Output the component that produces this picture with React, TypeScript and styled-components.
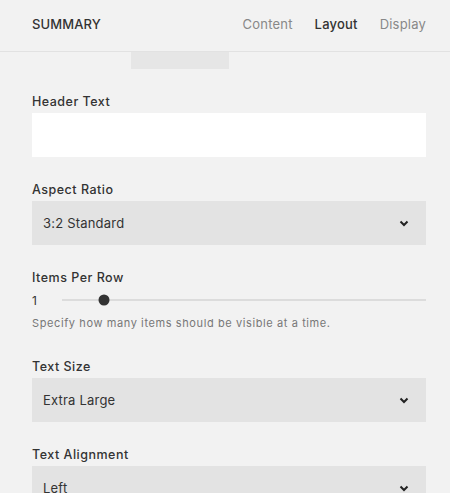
import React from "react";
import styled, { createGlobalStyle } from "styled-components";

const GlobalStyle = createGlobalStyle`
  html, body {
    margin: 0;
    padding: 0;
    background: #f2f2f2;
  }
  body {
    font-family: Inter, "Liberation Sans", sans-serif;
    -webkit-font-smoothing: antialiased;
  }
`;

const Chevron = () => (
  <svg width="10" height="7" viewBox="0 0 10 7">
    <path d="M1.5 1.5 L5 5 L8.5 1.5" fill="none" stroke="#222" strokeWidth="2" />
  </svg>
);

const SelectField: React.VFC<{ value: string }> = ({ value }) => (
  <Select>
    <span>{value}</span>
    <Chevron />
  </Select>
);

export default function App() {
  return (
    <>
      <GlobalStyle />
      <Panel>
        <Header>
          <Title>SUMMARY</Title>
          <Tabs>
            <Tab>Content</Tab>
            <Tab active>Layout</Tab>
            <Tab>Display</Tab>
          </Tabs>
        </Header>
        <Indicator />
        <Body>
          <Field>
            <Label>Header Text</Label>
            <TextInput />
          </Field>
          <Field>
            <Label>Aspect Ratio</Label>
            <SelectField value="3:2 Standard" />
          </Field>
          <Field>
            <Label>Items Per Row</Label>
            <SliderRow>
              <SliderValue>1</SliderValue>
              <Track>
                <Thumb style={{ left: `${(42 / 364) * 100}%` }} />
              </Track>
            </SliderRow>
            <Help>Specify how many items should be visible at a time.</Help>
          </Field>
          <Field>
            <Label>Text Size</Label>
            <SelectField value="Extra Large" />
          </Field>
          <Field>
            <Label>Text Alignment</Label>
            <SelectField value="Left" />
          </Field>
        </Body>
      </Panel>
    </>
  );
}

const Panel = styled.div`
  width: 450px;
  height: 493px;
  overflow: hidden;
  background: #f2f2f2;
`;

const Header = styled.header`
  height: 51px;
  display: flex;
  align-items: center;
  justify-content: space-between;
  padding: 0 24px 0 32px;
  border-bottom: 1px solid #e2e2e2;
`;

const Title = styled.div`
  font-size: 13px;
  font-weight: 500;
  letter-spacing: 0.1px;
  color: #333;
  margin-top: -3px;
`;

const Tabs = styled.nav`
  display: flex;
  gap: 22px;
  margin-top: -3px;
`;

const Tab = styled.span<{ active?: boolean }>`
  font-size: 13px;
  letter-spacing: 0.2px;
  font-weight: ${(p) => (p.active ? 500 : 400)};
  color: ${(p) => (p.active ? "#333" : "#888")};
`;

const Indicator = styled.div`
  margin-left: 131px;
  width: 98px;
  height: 17px;
  background: #e6e6e6;
`;

const Body = styled.div`
  padding: 24px 24px 0 32px;
  display: flex;
  flex-direction: column;
  gap: 24px;
`;

const Field = styled.div`
  display: flex;
  flex-direction: column;
`;

const Label = styled.label`
  font-size: 12.5px;
  line-height: 16px;
  font-weight: 500;
  letter-spacing: 0.5px;
  color: #333;
  padding-top: 1px;
  margin-bottom: 3px;
`;

const TextInput = styled.div`
  height: 44px;
  background: #fff;
`;

const Select = styled.div`
  height: 44px;
  background: #e3e3e3;
  display: flex;
  align-items: center;
  justify-content: space-between;
  padding: 0 17px 0 11px;
  font-size: 13px;
  letter-spacing: 0.2px;
  color: #333;
`;

const SliderRow = styled.div`
  display: flex;
  align-items: center;
  height: 22px;
`;

const SliderValue = styled.span`
  width: 30px;
  font-size: 12px;
  color: #333;
`;

const Track = styled.div`
  position: relative;
  flex: 1;
  height: 2px;
  background: #dcdcdc;
`;

const Thumb = styled.div`
  position: absolute;
  top: 50%;
  width: 11px;
  height: 11px;
  border-radius: 50%;
  background: #333;
  transform: translate(-50%, -50%);
`;

const Help = styled.p`
  margin: 5px 0 4px;
  font-size: 11px;
  line-height: 14px;
  letter-spacing: 0.6px;
  color: #777;
`;
